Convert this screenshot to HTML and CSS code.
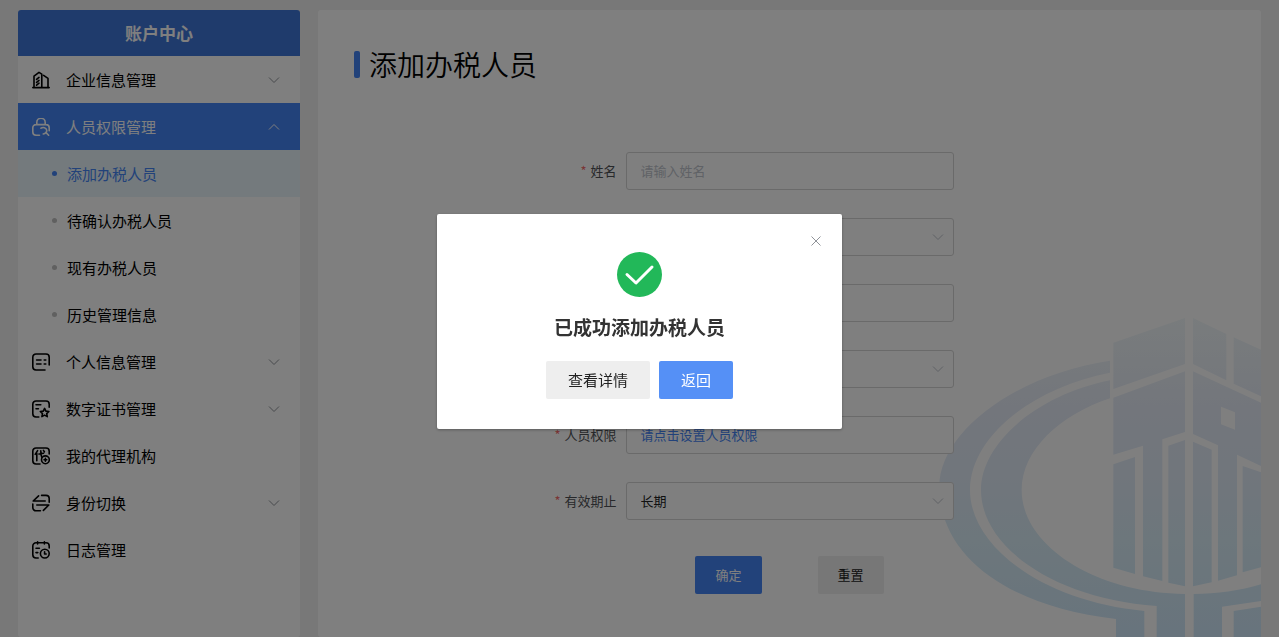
FILE: index.html
```html
<!DOCTYPE html>
<html lang="zh-CN">

<head>
    <meta charset="UTF-8">
    <meta name="viewport" content="width=device-width, initial-scale=1.0">
    <title>账户中心 - 添加办税人员</title>
    <link rel="stylesheet" href="styles.css">
</head>

<body>
    <svg class="sprite" aria-hidden="true">
        <symbol id="arrow-down" viewBox="0 0 12 12">
            <path d="M1 3.5l5 5 5-5" />
        </symbol>
        <symbol id="arrow-up" viewBox="0 0 12 12">
            <path d="M1 8.5l5-5 5 5" />
        </symbol>
    </svg>

    <div class="page">
        <aside class="sidebar">
            <h2 class="sidebar-title">账户中心</h2>
            <nav>
                <ul class="menu">
                    <li>
                        <a href="#" class="menu-item">
                            <svg class="menu-icon" viewBox="0 0 18 18">
                                <path d="M.8 16.6h16.4M2 16V5.2L7 1.4l2.8 1.8V16M11.6 4.4l4.4 3V16M4.6 8.4l2.4-2M4.6 11.4l2.4-2M4.6 14.2l2.4-2" />
                            </svg>
                            <span>企业信息管理</span>
                            <svg class="arrow"><use href="#arrow-down" /></svg>
                        </a>
                    </li>
                    <li>
                        <a href="#" class="menu-item active">
                            <svg class="menu-icon" viewBox="0 0 18 18">
                                <path d="M7.5 17.2H4A3.2 3.2 0 0 1 .8 14V9.8A3.2 3.2 0 0 1 4 6.6h10a3.2 3.2 0 0 1 3.2 3.2v3M4.8 6.6V4.4a4.2 4.2 0 0 1 8.4 0v2.2M9 10.2c2-1.4 5-.6 5.6 1.6.6 2-1 4-3.4 4.2M13.8 14.4l2.8 2.8" />
                            </svg>
                            <span>人员权限管理</span>
                            <svg class="arrow"><use href="#arrow-up" /></svg>
                        </a>
                        <ul class="submenu">
                            <li><a href="#" class="submenu-item current">添加办税人员</a></li>
                            <li><a href="#" class="submenu-item">待确认办税人员</a></li>
                            <li><a href="#" class="submenu-item">现有办税人员</a></li>
                            <li><a href="#" class="submenu-item">历史管理信息</a></li>
                        </ul>
                    </li>
                    <li>
                        <a href="#" class="menu-item">
                            <svg class="menu-icon" viewBox="0 0 18 18">
                                <path d="M13 17H4A3.2 3.2 0 0 1 .8 13.8V4.2A3.2 3.2 0 0 1 4 1h10a3.2 3.2 0 0 1 3.2 3.2V12M4.6 7H9M12.2 7h1.6M4.6 11H9M12.2 11h1.6" />
                            </svg>
                            <span>个人信息管理</span>
                            <svg class="arrow"><use href="#arrow-down" /></svg>
                        </a>
                    </li>
                    <li>
                        <a href="#" class="menu-item">
                            <svg class="menu-icon" viewBox="0 0 18 18">
                                <path d="M6.8 17H4A3.2 3.2 0 0 1 .8 13.8V4.2A3.2 3.2 0 0 1 4 1h10a3.2 3.2 0 0 1 3.2 3.2v3M4 4.8h4.8M4 8.8h2.4M12.6 8.4l1.3 2.7 3 .4-2.2 2.1.6 3-2.7-1.5-2.7 1.5.6-3-2.2-2.1 3-.4z" />
                            </svg>
                            <span>数字证书管理</span>
                            <svg class="arrow"><use href="#arrow-down" /></svg>
                        </a>
                    </li>
                    <li>
                        <a href="#" class="menu-item">
                            <svg class="menu-icon" viewBox="0 0 18 18">
                                <path d="M8 17H4A3.2 3.2 0 0 1 .8 13.8V4.2A3.2 3.2 0 0 1 4 1h10a3.2 3.2 0 0 1 3.2 3.2V7M5.6 3.6L3.2 7.4M4.8 6.4v7.4M7 7l4.6-.8M8.8 3.8c0 3 .2 4.8 1 6.4M11.4 3.4l1 1.4" />
                                <circle cx="13.4" cy="12.8" r="3.9" />
                                <path d="M13.4 11.4v2.8M12 12.8h2.8" />
                            </svg>
                            <span>我的代理机构</span>
                        </a>
                    </li>
                    <li>
                        <a href="#" class="menu-item">
                            <svg class="menu-icon" viewBox="0 0 18 18">
                                <path d="M6.6 1.8L1.2 7h12M9.6 1.4H14a3.2 3.2 0 0 1 3.2 3.2v3.6M11.4 16.4l5.4-5.4h-12M8.4 16.8H4a3.2 3.2 0 0 1-3.2-3.2V10" />
                            </svg>
                            <span>身份切换</span>
                            <svg class="arrow"><use href="#arrow-down" /></svg>
                        </a>
                    </li>
                    <li>
                        <a href="#" class="menu-item">
                            <svg class="menu-icon" viewBox="0 0 18 18">
                                <path d="M6.2 17H4a3.2 3.2 0 0 1-3.2-3.2V5A3.2 3.2 0 0 1 4 1.8h10A3.2 3.2 0 0 1 17.2 5v2M5.6.8V3M12.4.8V3M4 7.2h3.4M4 11.6h1.8" />
                                <circle cx="12.8" cy="12.6" r="4.4" />
                                <path d="M12.6 10.8v2.2h1.6" />
                            </svg>
                            <span>日志管理</span>
                        </a>
                    </li>
                </ul>
            </nav>
        </aside>

        <main class="content">
            <svg class="watermark" viewBox="0 0 993 1011" aria-hidden="true">
                <defs>
                    <linearGradient id="fade" gradientUnits="userSpaceOnUse" x1="0" y1="54" x2="0" y2="1011">
                        <stop offset="0" stop-color="#f2f8fa" />
                        <stop offset="0.3" stop-color="#e6ecf8" />
                        <stop offset="0.5" stop-color="#e2ecf8" />
                        <stop offset="0.7" stop-color="#daeef8" />
                        <stop offset="1" stop-color="#d0e8fa" />
                    </linearGradient>
                </defs>
                <g fill="url(#fade)" fill-rule="evenodd">
                    <!-- rings -->
                    <path d="M540 182C250 225 28 400 28 560C28 770 235 920 558 957V1011H643V933C340 905 120 740 120 570C120 415 300 265 540 218Z" />
                    <path d="M540 241C320 285 153 430 153 570C153 740 370 895 680 918V1011H765V882C490 878 275 735 275 570C275 450 390 345 540 295Z" />
                    <path d="M791 882C860 882 930 872 993 853V903L876 920V1011H791ZM911 933L993 920V1011H911Z" />
                    <!-- towers -->
                    <path d="M550 128L765 54V192L550 267ZM789 54L889 102V241L789 192ZM911 112L993 149V289L911 251Z" />
                    <path d="M550 293L765 214V396L697 418V843L639 829V437L550 464Z" />
                    <path d="M789 214L993 308V498L921 464V826L864 842V436L789 402ZM873 320L915 337V389L873 373Z" />
                    <path d="M550 493L615 471V822L550 803ZM715 437L765 420V859L715 848ZM789 425L845 449V847L789 859ZM938 498L993 517V802L938 817Z" />
                </g>
            </svg>

            <h1 class="content-title">添加办税人员</h1>

            <form class="form">
                <div class="form-row">
                    <label for="name">姓名</label>
                    <input type="text" id="name" class="field" placeholder="请输入姓名">
                </div>
                <div class="form-row">
                    <label for="idType"></label>
                    <div class="select">
                        <select id="idType" class="field">
                            <option></option>
                        </select>
                        <svg class="arrow"><use href="#arrow-down" /></svg>
                    </div>
                </div>
                <div class="form-row">
                    <label for="idNumber"></label>
                    <input type="text" id="idNumber" class="field">
                </div>
                <div class="form-row">
                    <label for="role"></label>
                    <div class="select">
                        <select id="role" class="field">
                            <option></option>
                        </select>
                        <svg class="arrow"><use href="#arrow-down" /></svg>
                    </div>
                </div>
                <div class="form-row">
                    <label for="permission">人员权限</label>
                    <button type="button" id="permission" class="field field-link">请点击设置人员权限</button>
                </div>
                <div class="form-row">
                    <label for="expiry">有效期止</label>
                    <div class="select">
                        <select id="expiry" class="field">
                            <option>长期</option>
                        </select>
                        <svg class="arrow"><use href="#arrow-down" /></svg>
                    </div>
                </div>
                <div class="form-actions">
                    <button type="button" class="btn btn-primary">确定</button>
                    <button type="reset" class="btn">重置</button>
                </div>
            </form>
        </main>
    </div>

    <div class="overlay">
        <div class="dialog" role="dialog" aria-modal="true" aria-labelledby="dialogTitle">
            <button type="button" class="dialog-close" aria-label="关闭">
                <svg viewBox="0 0 12 12">
                    <path d="M1.5 1.5l9 9M10.5 1.5l-9 9" />
                </svg>
            </button>
            <svg class="dialog-icon" viewBox="0 0 45 45">
                <circle cx="22.5" cy="22.5" r="22.5" />
                <path d="M10 22.5l9 8.5 16-16" />
            </svg>
            <h3 class="dialog-title" id="dialogTitle">已成功添加办税人员</h3>
            <div class="dialog-actions">
                <button type="button" class="btn btn-large">查看详情</button>
                <button type="button" class="btn btn-large btn-light">返回</button>
            </div>
        </div>
    </div>
</body>

</html>
```
FILE: styles.css
```css
:root {
    --primary-color: #4484f4;
    --header-color: #3e76d8;
    --page-color: #f0f0f0;
    --border-color: #d4d4d4;
    --text-color: #222222;
}

* {
    margin: 0;
    padding: 0;
    box-sizing: border-box;
}

body {
    font-family: "Noto Sans CJK SC", "Microsoft YaHei", sans-serif;
    font-size: 15px;
    color: var(--text-color);
    background-color: #ffffff;
    overflow: hidden;
}

button,
input,
select {
    font-family: inherit;
}

ul {
    list-style-type: none;
}

.sprite {
    display: none;
}

.page {
    display: flex;
    gap: 18px;
    height: calc(100vh - 2px);
    margin-right: 1px;
    padding: 10px 18px 0;
    background-color: var(--page-color);
    overflow: hidden;
}

/* Sidebar */
.sidebar {
    flex: 0 0 282px;
    background-color: #ffffff;
    border-radius: 3px;
    overflow: hidden;
}

.sidebar-title {
    font-size: 17px;
    line-height: 46px;
    text-align: center;
    color: #ffffff;
    background-color: var(--header-color);
}

.menu-item {
    display: flex;
    align-items: center;
    gap: 16px;
    height: 47px;
    padding: 0 20px 0 14px;
    color: #000000;
    text-decoration: none;
}

.menu-item.active {
    color: #ffffff;
    background-color: var(--primary-color);
}

.menu-icon {
    width: 18px;
    height: 18px;
    fill: none;
    stroke: currentColor;
    stroke-width: 1.6;
    stroke-linecap: round;
    stroke-linejoin: round;
}

.arrow {
    width: 12px;
    height: 12px;
    fill: none;
    stroke: #909399;
}

.menu-item .arrow {
    margin-left: auto;
}

.menu-item.active .arrow {
    stroke: #ffffff;
}

.submenu-item {
    display: flex;
    align-items: center;
    gap: 10px;
    height: 47px;
    padding-left: 34px;
    color: #000000;
    text-decoration: none;
}

.submenu-item::before {
    content: "";
    width: 5px;
    height: 5px;
    border-radius: 50%;
    background-color: #c0c0c0;
}

.submenu-item.current {
    color: var(--primary-color);
    background-color: #e8f4fa;
}

.submenu-item.current::before {
    background-color: var(--primary-color);
}

/* Content */
.content {
    flex: 1;
    position: relative;
    padding: 34px 36px;
    background-color: #ffffff;
    border-radius: 3px;
}

.watermark {
    position: absolute;
    right: 0;
    bottom: 0;
    width: 331px;
    height: 337px;
}

.content-title {
    display: flex;
    align-items: center;
    gap: 9px;
    margin-bottom: 68px;
    font-size: 28px;
    font-weight: 350;
    line-height: 40px;
    color: #000000;
}

.content-title::before {
    content: "";
    width: 6px;
    height: 27px;
    border-radius: 2px;
    background-color: var(--primary-color);
}

.form {
    position: relative;
    font-size: 13px;
}

.form-row {
    display: grid;
    grid-template-columns: 1fr 328px 1fr;
    align-items: center;
    column-gap: 9px;
    margin-bottom: 28px;
}

.form-row label {
    padding-bottom: 2px;
    text-align: right;
    color: #505256;
}

.form-row label::before {
    content: "*";
    margin-right: 4px;
    color: #f56c6c;
}

.form-row label:empty::before {
    content: none;
}

.field {
    display: block;
    width: 100%;
    height: 38px;
    padding: 0 14px 2px;
    font-size: 13px;
    color: var(--text-color);
    background-color: #ffffff;
    border: 1px solid var(--border-color);
    border-radius: 3px;
    appearance: none;
}

.field::placeholder {
    color: #c0c4cc;
}

.field-link {
    text-align: left;
    color: var(--primary-color);
}

.select {
    position: relative;
}

.select .arrow {
    position: absolute;
    top: 13px;
    right: 10px;
    stroke: #c0c4cc;
    pointer-events: none;
}

.form-actions {
    display: flex;
    justify-content: center;
    gap: 56px;
    margin-top: 36px;
}

.btn {
    height: 38px;
    padding: 0 20px 2px;
    font-size: 13px;
    color: var(--text-color);
    background-color: #eeeeee;
    border: none;
    border-radius: 2px;
    cursor: pointer;
}

.btn-primary {
    color: #ffffff;
    background-color: var(--primary-color);
}

.btn-large {
    padding: 0 22px 2px;
    font-size: 15px;
}

.btn-light {
    color: #ffffff;
    background-color: #5590f6;
}

/* Dialog */
.overlay {
    position: fixed;
    top: 0;
    right: 1px;
    bottom: 2px;
    left: 0;
    background-color: rgba(0, 0, 0, 0.5);
}

.dialog {
    position: relative;
    display: flex;
    flex-direction: column;
    align-items: center;
    width: 405px;
    margin: 214px auto 0;
    padding: 38px 20px 30px;
    background-color: #ffffff;
    border-radius: 2px;
    box-shadow: 0 1px 3px rgba(0, 0, 0, 0.3);
}

.dialog-close {
    position: absolute;
    top: 21px;
    right: 20px;
    width: 12px;
    height: 12px;
    background: none;
    border: none;
    cursor: pointer;
}

.dialog-close svg {
    display: block;
    fill: none;
    stroke: #909399;
}

.dialog-icon {
    width: 45px;
    height: 45px;
    fill: #22b859;
}

.dialog-icon path {
    fill: none;
    stroke: #ffffff;
    stroke-width: 3;
    stroke-linecap: round;
    stroke-linejoin: round;
}

.dialog-title {
    margin: 16px 0 20px;
    font-size: 19px;
    line-height: 28px;
    color: #333333;
}

.dialog-actions {
    display: flex;
    gap: 9px;
}
```
